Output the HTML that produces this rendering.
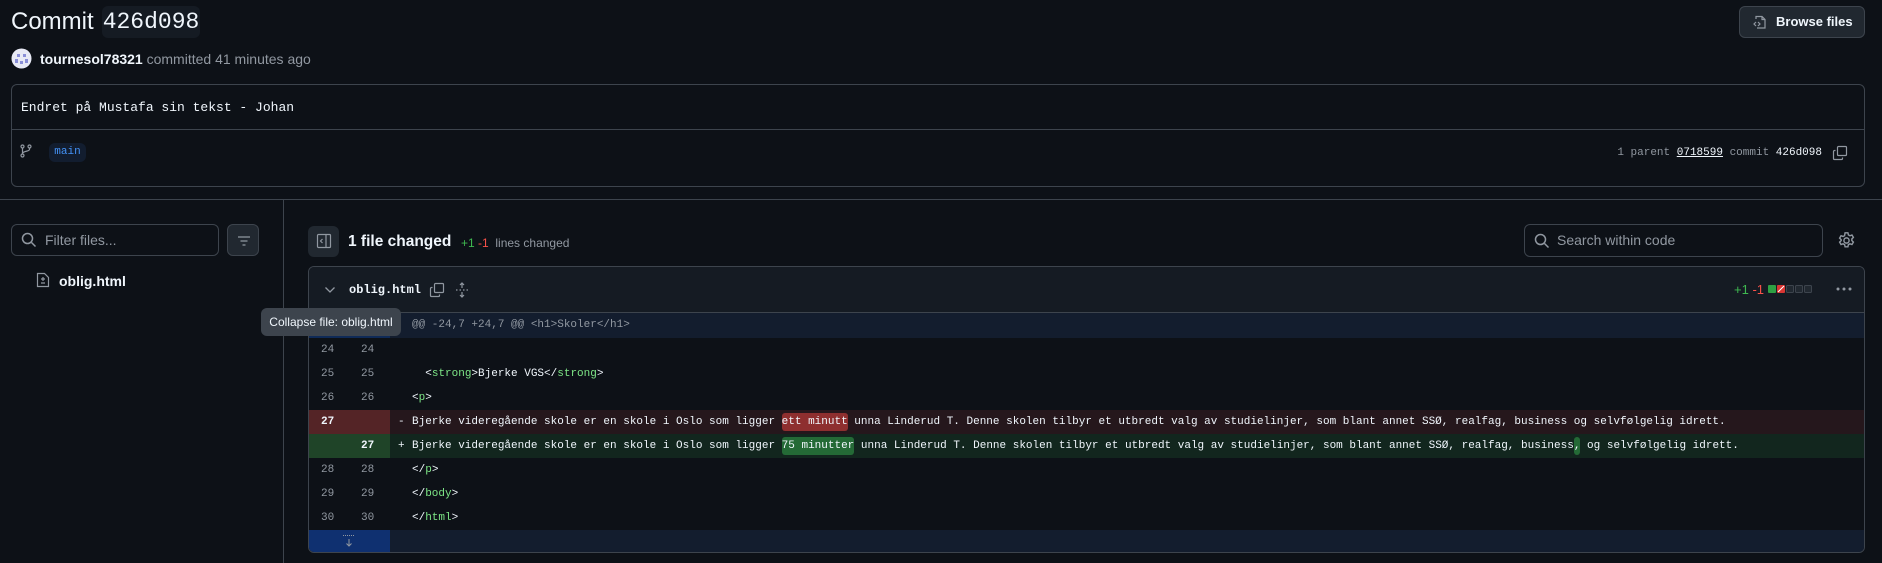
<!DOCTYPE html>
<html><head><meta charset="utf-8"><style>
*{box-sizing:border-box;margin:0;padding:0}
body{width:1882px;height:563px;background:#0d1117;color:#f0f6fc;font-family:"Liberation Sans",sans-serif;position:relative;overflow:hidden}
.a{position:absolute}
.mono{font-family:"Liberation Mono",monospace}
.muted{color:#9198a1}
.row{position:absolute;left:0;right:0;height:24px;font-family:"Liberation Mono",monospace;font-size:11px;line-height:24px;white-space:pre}
.n1,.n2{position:absolute;top:0;width:40px;height:24px;color:#9198a1;padding-left:12px}
.n1{left:0}.n2{left:40px}
.code{position:absolute;left:81px;right:0;top:0;height:24px;padding-left:22px;color:#f0f6fc}
.sg{position:absolute;left:8px}
.t{color:#7ee787}
.hl{display:inline-block;line-height:18px;border-radius:3px}
</style></head><body>
<div class="a" style="left:11px;top:5px;font-size:24px;line-height:34px">Commit</div>
<div class="a mono" style="left:102px;top:6px;width:98px;height:32px;background:#151b23;border-radius:6px;font-size:23px;line-height:32px;text-align:center">426d098</div>
<div class="a" style="left:1739px;top:6px;width:126px;height:32px;background:#212830;border:1px solid #3d444d;border-radius:6px;font-size:13px;font-weight:bold;line-height:30px;padding-left:36px">Browse files
<svg class="a" style="left:12px;top:7px" width="16" height="16" viewBox="0 0 16 16" fill="none" stroke="#9198a1" stroke-width="1.2"><path d="M4 5V2.5h6l3 3v8.5H5"/><path d="M10 2.5v3h3"/><path d="M4 8l-2 2 2 2M6 8l2 2-2 2"/></svg></div>
<svg class="a" style="left:11px;top:48px" width="21" height="21"><circle cx="10.5" cy="10.5" r="10" fill="#e8eaf6"/><rect x="6" y="6" width="3" height="3" fill="#8a8fd8"/><rect x="12" y="6" width="3" height="3" fill="#8a8fd8"/><rect x="4" y="11" width="3" height="4" fill="#8a8fd8"/><rect x="14" y="11" width="3" height="4" fill="#8a8fd8"/><rect x="9" y="13" width="3" height="3" fill="#8a8fd8"/></svg>
<div class="a" style="left:40px;top:50px;font-size:14px;line-height:18px"><b>tournesol78321</b> <span class="muted">committed 41 minutes ago</span></div>

<div class="a" style="left:11px;top:84px;width:1854px;height:103px;border:1px solid #3d444d;border-radius:6px">
 <div class="a mono" style="left:9px;top:14px;font-size:13px;line-height:18px">Endret på Mustafa sin tekst - Johan</div>
 <div class="a" style="left:0;right:0;top:44px;border-top:1px solid #3d444d"></div>
 <svg class="a" style="left:8px;top:59px" width="12" height="14" viewBox="0 0 12 14" fill="none" stroke="#9198a1" stroke-width="1.2"><circle cx="2.5" cy="2.5" r="1.5"/><circle cx="9.5" cy="2.5" r="1.5"/><circle cx="2.5" cy="11.5" r="1.5"/><path d="M2.5 4v6M9.5 4v1.5c0 2-7 1.5-7 4"/></svg>
 <div class="a mono" style="left:37px;top:58px;width:37px;height:19px;background:#121d2f;border-radius:6px;color:#4493f8;font-size:11px;line-height:19px;text-align:center">main</div>
 <div class="a mono" style="right:42px;top:59px;font-size:11px;line-height:18px;color:#9198a1">1 parent <span style="color:#f0f6fc;text-decoration:underline">0718599</span> commit <span style="color:#f0f6fc">426d098</span></div>
 <svg class="a" style="right:16px;top:60px" width="16" height="16" viewBox="0 0 16 16" fill="none" stroke="#9198a1" stroke-width="1.2"><rect x="5.5" y="1.5" width="9" height="9" rx="1"/><path d="M3.5 5.5h-1a1 1 0 0 0-1 1v7a1 1 0 0 0 1 1h7a1 1 0 0 0 1-1v-1"/></svg>
</div>
<div class="a" style="left:0;right:0;top:199px;border-top:1px solid #3d444d"></div>
<div class="a" style="left:283px;top:199px;bottom:0;border-left:1px solid #3d444d"></div>

<div class="a" style="left:11px;top:224px;width:208px;height:32px;border:1px solid #3d444d;border-radius:6px;font-size:14px;line-height:30px;padding-left:33px;color:#9198a1">Filter files...
<svg class="a" style="left:9px;top:7px" width="16" height="16" viewBox="0 0 16 16" fill="none" stroke="#9198a1" stroke-width="1.5"><circle cx="6.5" cy="6.5" r="5"/><path d="M10.5 10.5l4 4"/></svg></div>
<div class="a" style="left:227px;top:224px;width:32px;height:32px;background:#212830;border:1px solid #3d444d;border-radius:6px">
<svg class="a" style="left:8px;top:8px" width="16" height="16" viewBox="0 0 16 16" stroke="#9198a1" stroke-width="1.3"><path d="M2 4h12M4.5 8h7M6.5 12h3"/></svg></div>
<svg class="a" style="left:36px;top:272px" width="14" height="16" viewBox="0 0 14 16" fill="none" stroke="#9198a1" stroke-width="1.2"><path d="M1.5 1.5h7l4 4v9h-11z"/><path d="M7 5v4M5 7h4M5 11h4"/></svg>
<div class="a" style="left:59px;top:272px;font-size:14px;font-weight:bold;line-height:18px">oblig.html</div>

<div class="a" style="left:308px;top:226px;width:31px;height:31px;background:#212830;border-radius:6px">
<svg class="a" style="left:8px;top:7px" width="16" height="16" viewBox="0 0 16 16" fill="none" stroke="#9198a1" stroke-width="1.2"><rect x="1.5" y="1.5" width="13" height="13" rx="1"/><path d="M10 1.5v13M6.5 6l-2 2 2 2"/></svg></div>
<div class="a" style="left:348px;top:232px;font-size:15.5px;font-weight:bold;line-height:20px">1 file changed</div>
<div class="a" style="left:461px;top:235px;font-size:12px;line-height:16px"><span style="color:#3fb950">+1</span> <span style="color:#f85149">-1</span> <span class="muted">&nbsp;lines changed</span></div>
<div class="a" style="left:1524px;top:224px;width:299px;height:33px;border:1px solid #3d444d;border-radius:6px;font-size:14px;line-height:31px;padding-left:32px;color:#9198a1">Search within code
<svg class="a" style="left:9px;top:8px" width="16" height="16" viewBox="0 0 16 16" fill="none" stroke="#9198a1" stroke-width="1.5"><circle cx="6.5" cy="6.5" r="5"/><path d="M10.5 10.5l4 4"/></svg></div>
<svg class="a" style="left:1837px;top:231px" width="19" height="19" viewBox="0 0 16 16" fill="none" stroke="#9198a1" stroke-width="1.2"><circle cx="8" cy="8" r="2.2"/><path d="M6.8 1.5h2.4l.4 1.8 1.3.7 1.7-.6 1.2 2-1.3 1.3v1.4l1.3 1.3-1.2 2-1.7-.6-1.3.7-.4 1.8H6.8l-.4-1.8-1.3-.7-1.7.6-1.2-2 1.3-1.3V7.3L2.2 6l1.2-2 1.7.6 1.3-.7z"/></svg>

<div class="a" style="left:308px;top:266px;width:1557px;height:287px;border:1px solid #3d444d;border-radius:6px;overflow:hidden">
 <div class="a" style="left:0;right:0;top:0;height:46px;background:#151b23;border-bottom:1px solid #3d444d">
  <svg class="a" style="left:15px;top:18px" width="12" height="10" viewBox="0 0 12 10" fill="none" stroke="#9198a1" stroke-width="1.3"><path d="M1.5 2.5l4.5 4.5 4.5-4.5"/></svg>
  <div class="a mono" style="left:40px;top:14px;font-size:12px;font-weight:bold;line-height:18px">oblig.html</div>
  <svg class="a" style="left:120px;top:15px" width="16" height="16" viewBox="0 0 16 16" fill="none" stroke="#9198a1" stroke-width="1.2"><rect x="5.5" y="1.5" width="9" height="9" rx="1"/><path d="M3.5 5.5h-1a1 1 0 0 0-1 1v7a1 1 0 0 0 1 1h7a1 1 0 0 0 1-1v-1"/></svg>
  <svg class="a" style="left:145px;top:15px" width="16" height="16" viewBox="0 0 16 16" fill="none" stroke="#9198a1" stroke-width="1.2"><path d="M8 1v5M6 3l2-2 2 2M8 15v-5M6 13l2 2 2-2M2 8h1.5M5.5 8h1.5M9 8h1.5M12.5 8H14"/></svg>
  <div class="a" style="right:100px;top:15px;font-size:13px;line-height:16px"><span style="color:#3fb950">+1</span> <span style="color:#f85149">-1</span></div>
  <svg class="a" style="right:12px;top:18px" width="16" height="8"><circle cx="2" cy="4" r="1.5" fill="#9198a1"/><circle cx="8" cy="4" r="1.5" fill="#9198a1"/><circle cx="14" cy="4" r="1.5" fill="#9198a1"/></svg>
  <svg class="a" style="right:50px;top:17px" width="46" height="10"><rect x="0" y="1" width="8" height="8" rx="1" fill="#2ea043"/><rect x="9" y="1" width="8" height="8" rx="1" fill="#da3633"/><path d="M10 8l6-6" stroke="#fff" stroke-width="1"/><rect x="18.5" y="1.5" width="7" height="7" rx="1" fill="#212830" stroke="#3d444d"/><rect x="27.5" y="1.5" width="7" height="7" rx="1" fill="#212830" stroke="#3d444d"/><rect x="36.5" y="1.5" width="7" height="7" rx="1" fill="#212830" stroke="#3d444d"/></svg>
 </div>
 <div class="row" style="top:46px;height:25px;background:#131d2e;color:#9198a1"><div class="a" style="left:0;top:0;width:81px;height:25px;background:#0f2a57"></div><div class="code" style="color:#9198a1;padding-left:22px">@@ -24,7 +24,7 @@ &lt;h1&gt;Skoler&lt;/h1&gt;</div></div>
 <div class="row" style="top:71px"><div class="n1">24</div><div class="n2">24</div><div class="code"></div></div>
 <div class="row" style="top:95px"><div class="n1">25</div><div class="n2">25</div><div class="code">  &lt;<span class="t">strong</span>&gt;Bjerke VGS&lt;/<span class="t">strong</span>&gt;</div></div>
 <div class="row" style="top:119px"><div class="n1">26</div><div class="n2">26</div><div class="code">&lt;<span class="t">p</span>&gt;</div></div>
 <div class="row" style="top:143px;background:#25171c"><div class="a" style="left:0;top:0;width:81px;height:24px;background:#542426"></div><div class="n1" style="color:#f0f6fc;font-weight:bold">27</div><div class="code"><span class="sg">-</span>Bjerke videregående skole er en skole i Oslo som ligger <span class="hl" style="background:#8e2f2f">ett minutt</span> unna Linderud T. Denne skolen tilbyr et utbredt valg av studielinjer, som blant annet SSØ, realfag, business og selvfølgelig idrett.</div></div>
 <div class="row" style="top:167px;background:#12261e"><div class="a" style="left:0;top:0;width:81px;height:24px;background:#1f4428"></div><div class="n2" style="color:#f0f6fc;font-weight:bold">27</div><div class="code"><span class="sg">+</span>Bjerke videregående skole er en skole i Oslo som ligger <span class="hl" style="background:#246a36">75 minutter</span> unna Linderud T. Denne skolen tilbyr et utbredt valg av studielinjer, som blant annet SSØ, realfag, business<span class="hl" style="background:#246a36">,</span> og selvfølgelig idrett.</div></div>
 <div class="row" style="top:191px"><div class="n1">28</div><div class="n2">28</div><div class="code">&lt;/<span class="t">p</span>&gt;</div></div>
 <div class="row" style="top:215px"><div class="n1">29</div><div class="n2">29</div><div class="code">&lt;/<span class="t">body</span>&gt;</div></div>
 <div class="row" style="top:239px"><div class="n1">30</div><div class="n2">30</div><div class="code">&lt;/<span class="t">html</span>&gt;</div></div>
 <div class="row" style="top:263px;height:24px;background:#131d2e"><div class="a" style="left:0;top:0;width:81px;height:24px;background:#0f3070"></div>
 <svg class="a" style="left:33px;top:4px" width="14" height="14" viewBox="0 0 14 14" stroke="#9198a1" stroke-width="1" fill="none"><path d="M1 1.5h12" stroke-dasharray="1 1"/><path d="M7 5v7M4.5 9.5L7 12l2.5-2.5"/></svg></div>
</div>

<div class="a" style="left:261px;top:308px;width:140px;height:28px;background:#3d444d;border-radius:6px;font-size:12px;line-height:28px;text-align:center;color:#f0f6fc">Collapse file: oblig.html</div>
</body></html>
